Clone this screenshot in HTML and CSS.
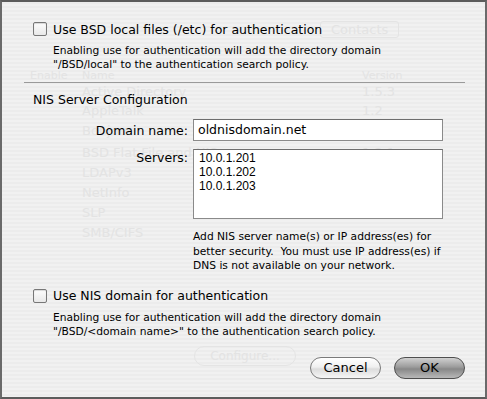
FILE: index.html
```html
<!DOCTYPE html>
<html lang="en">

<head>
    <meta charset="UTF-8">
    <meta name="viewport" content="width=device-width, initial-scale=1.0">
    <title>NIS Configuration</title>
    <link rel="stylesheet" href="styles.css">
</head>

<body>
    <div class="window">
        <!-- faded window content behind the sheet -->
        <div class="ghost">
            <span class="ghost-tab">Contacts</span>
            <span class="ghost-head g-enable">Enable</span>
            <span class="ghost-head g-name">Name</span>
            <span class="ghost-head g-version">Version</span>
            <span class="ghost-row" style="top: 82px">Active Directory</span>
            <span class="ghost-ver" style="top: 82px">1.5.3</span>
            <span class="ghost-row" style="top: 101px">AppleTalk</span>
            <span class="ghost-ver" style="top: 101px">1.2</span>
            <span class="ghost-row" style="top: 121px">Bonjour</span>
            <span class="ghost-row" style="top: 143px">BSD Flat File and NIS</span>
            <span class="ghost-ver" style="top: 143px">1.2.1</span>
            <span class="ghost-row" style="top: 163px">LDAPv3</span>
            <span class="ghost-row" style="top: 183px">NetInfo</span>
            <span class="ghost-row" style="top: 203px">SLP</span>
            <span class="ghost-row" style="top: 223px">SMB/CIFS</span>
            <span class="ghost-btn">Configure...</span>
        </div>

        <div class="sheet">
            <label class="check-row">
                <span class="checkbox"></span>
                <span class="check-label">Use BSD local files (/etc) for authentication</span>
            </label>
            <p class="note">Enabling use for authentication will add the directory domain<br>"/BSD/local" to the authentication search policy.</p>

            <hr class="divider">

            <h2 class="section-title">NIS Server Configuration</h2>

            <div class="form">
                <span class="form-label">Domain name:</span>
                <div class="field">oldnisdomain.net</div>

                <span class="form-label label-top">Servers:</span>
                <div class="field servers">10.0.1.201<br>10.0.1.202<br>10.0.1.203</div>

                <span></span>
                <p class="help">Add NIS server name(s) or IP address(es) for<br>better security.&nbsp; You must use IP address(es) if<br>DNS is not available on your network.</p>
            </div>

            <label class="check-row second">
                <span class="checkbox"></span>
                <span class="check-label">Use NIS domain for authentication</span>
            </label>
            <p class="note">Enabling use for authentication will add the directory domain<br>"/BSD/&lt;domain name&gt;" to the authentication search policy.</p>

            <div class="buttons">
                <button class="button">Cancel</button>
                <button class="button default">OK</button>
            </div>
        </div>
    </div>
</body>

</html>
```

FILE: styles.css
```css
body {
    margin: 0;
    padding: 0;
    font-family: "DejaVu Sans", "Liberation Sans", sans-serif;
    color: #000;
}

.window {
    position: relative;
    width: 487px;
    height: 399px;
    box-sizing: border-box;
    border-top: 2px solid #5c5c5c;
    border-left: 2px solid #6a6a6a;
    border-right: 2px solid #6a6a6a;
    border-bottom: 2px solid #5c5c5c;
    background: repeating-linear-gradient(to bottom, #ececec 0, #ececec 2px, #f1f1f1 2px, #f1f1f1 4px);
    overflow: hidden;
}

/* Ghost content */
.ghost {
    position: absolute;
    inset: 0;
    color: #e3e3e3;
    font-size: 13px;
}

.ghost span {
    position: absolute;
}

.ghost-tab {
    left: 318px;
    top: 19px;
    padding: 0 10px;
    border: 1px solid #e4e4e4;
    border-radius: 3px;
}

.ghost-head {
    top: 67px;
    font-size: 11px;
}

.g-enable { left: 28px; }
.g-name { left: 80px; }
.g-version { left: 360px; }

.ghost-row {
    left: 80px;
}

.ghost-ver {
    left: 360px;
}

.ghost-btn {
    left: 192px;
    top: 344px;
    width: 100px;
    height: 18px;
    border: 1px solid #e4e4e4;
    border-radius: 10px;
    text-align: center;
    font-size: 12px;
    line-height: 18px;
}

/* Sheet */
.sheet {
    position: relative;
    padding: 18px 20px 0 31px;
}

.check-row {
    display: flex;
    align-items: center;
    gap: 6px;
    height: 18px;
}

.checkbox {
    width: 12px;
    height: 12px;
    border: 1px solid #777;
    border-radius: 2px;
    background: linear-gradient(to bottom, #fdfdfd, #e8e8e8);
    box-shadow: inset 0 1px 1px rgba(0, 0, 0, 0.15);
}

.check-label {
    font-size: 12.5px;
}

.note {
    margin: 6px 0 0 20px;
    font-size: 10.7px;
    line-height: 14px;
}

.divider {
    margin: 10px 0 0 -9px;
    border: 0;
    border-top: 1px solid #9a9a9a;
}

.section-title {
    margin: 9px 0 0 0;
    font-size: 12.5px;
    font-weight: normal;
}

.form {
    display: grid;
    grid-template-columns: 155px 250px;
    column-gap: 5px;
    row-gap: 8px;
    margin-top: 12px;
}

.form-label {
    text-align: right;
    font-size: 12.5px;
    align-self: center;
}

.label-top {
    align-self: start;
    padding-top: 1px;
}

.field {
    height: 22px;
    box-sizing: border-box;
    border: 1px solid #8a8a8a;
    border-top-color: #6e6e6e;
    background: #fff;
    font-size: 12.5px;
    padding: 2px 4px;
    line-height: 16px;
}

.servers {
    height: 70px;
    font-family: "Liberation Sans", sans-serif;
    font-size: 12px;
    line-height: 14px;
    padding: 1px 5px;
}

.help {
    margin: 3px 0 0 0;
    font-size: 10.7px;
    line-height: 14.5px;
}

.check-row.second {
    margin-top: 13px;
}

.buttons {
    display: flex;
    justify-content: flex-end;
    gap: 13px;
    margin-top: 18px;
}

.button {
    width: 71px;
    height: 22px;
    border: 1px solid #7a7a7a;
    border-radius: 11px;
    background: linear-gradient(to bottom, #ffffff 0%, #f0f0f0 45%, #dcdcdc 55%, #f6f6f6 100%);
    font-family: "DejaVu Sans", sans-serif;
    font-size: 13px;
    color: #000;
    padding: 0;
}

.button.default {
    border-color: #4e4e4e;
    background: linear-gradient(to bottom, #d0d0d0 0%, #9c9c9c 45%, #888 55%, #b8b8b8 100%);
}
```
